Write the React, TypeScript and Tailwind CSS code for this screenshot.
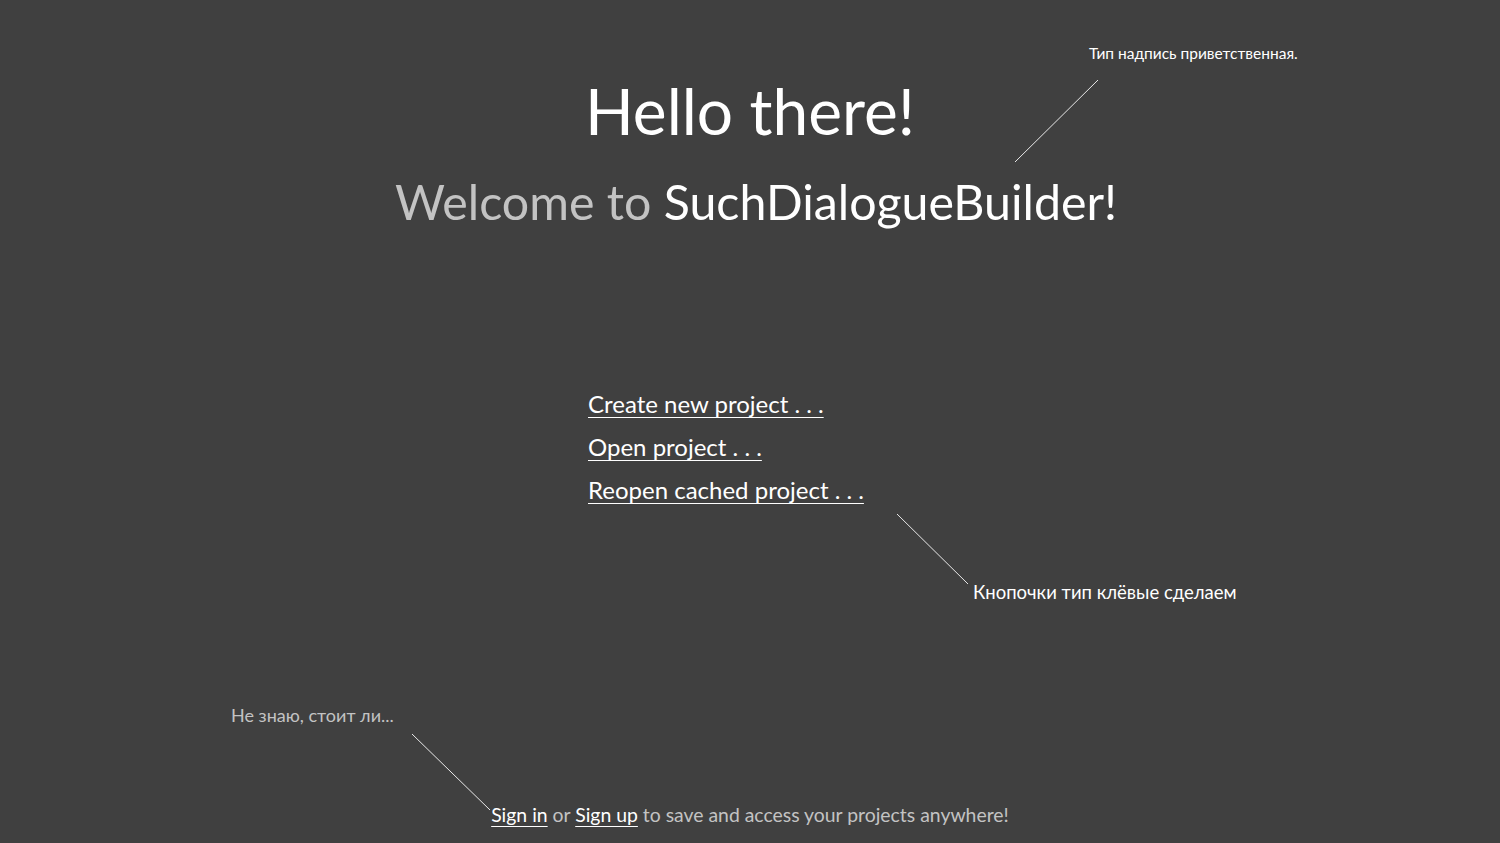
import type { ReactNode } from "react";

const font = { fontFamily: '"Lato", "Noto Sans", sans-serif' };

function Note({
    className,
    children,
}: {
    className: string;
    children: ReactNode;
}) {
    return (
        <div className={`absolute whitespace-nowrap ${className}`}>
            {children}
        </div>
    );
}

export default function App() {
    return (
        <div
            className="relative flex flex-col w-full h-[843px] overflow-hidden bg-[#404040] text-white"
            style={font}
        >
            {/* greeting */}
            <header className="flex flex-col items-center pt-[71px]">
                <h1 className="text-[64px] leading-[80px] font-normal text-white">
                    Hello there!
                </h1>
                <h2 className="mt-[20px] pl-[12px] text-[48.3px] leading-[60px] font-normal text-[#c3c3c3]">
                    Welcome to{" "}
                    <span className="text-white">SuchDialogueBuilder!</span>
                </h2>
            </header>

            {/* actions */}
            <main className="flex justify-center pt-[158px]">
                <ul className="flex flex-col w-[324px] gap-[13px] text-[24px] leading-[30px]">
                    <li>
                        <a href="#" className="underline underline-offset-4 decoration-1">
                            Create new project . . .
                        </a>
                    </li>
                    <li>
                        <a href="#" className="underline underline-offset-4 decoration-1">
                            Open project . . .
                        </a>
                    </li>
                    <li>
                        <a href="#" className="underline underline-offset-4 decoration-1">
                            Reopen cached project . . .
                        </a>
                    </li>
                </ul>
            </main>

            <footer className="mt-auto flex justify-center pb-[15px] text-[19.4px] leading-[26px] text-[#c3c3c3]">
                <p>
                    <a href="#" className="text-white underline underline-offset-4 decoration-1">
                        Sign in
                    </a>{" "}
                    or{" "}
                    <a href="#" className="text-white underline underline-offset-4 decoration-1">
                        Sign up
                    </a>{" "}
                    to save and access your projects anywhere!
                </p>
            </footer>

            {/* review notes */}
            <Note className="left-[1089px] top-[43px] text-[15.5px] leading-[20px] text-white">
                Тип надпись приветственная.
            </Note>
            <Note className="left-[973px] top-[580px] text-[18.5px] leading-[24px] text-white">
                Кнопочки тип клёвые сделаем
            </Note>
            <Note className="left-[231px] top-[704px] text-[18px] leading-[22px] text-[#c3c3c3]">
                Не знаю, стоит ли...
            </Note>
            <svg
                className="absolute inset-0 pointer-events-none"
                width="1500"
                height="843"
                viewBox="0 0 1500 843"
            >
                <g stroke="#e8e8e8" strokeWidth="1">
                    <line x1="1098" y1="80" x2="1015" y2="162" />
                    <line x1="897" y1="514" x2="968" y2="584" />
                    <line x1="412" y1="734" x2="490" y2="810" />
                </g>
            </svg>
        </div>
    );
}
